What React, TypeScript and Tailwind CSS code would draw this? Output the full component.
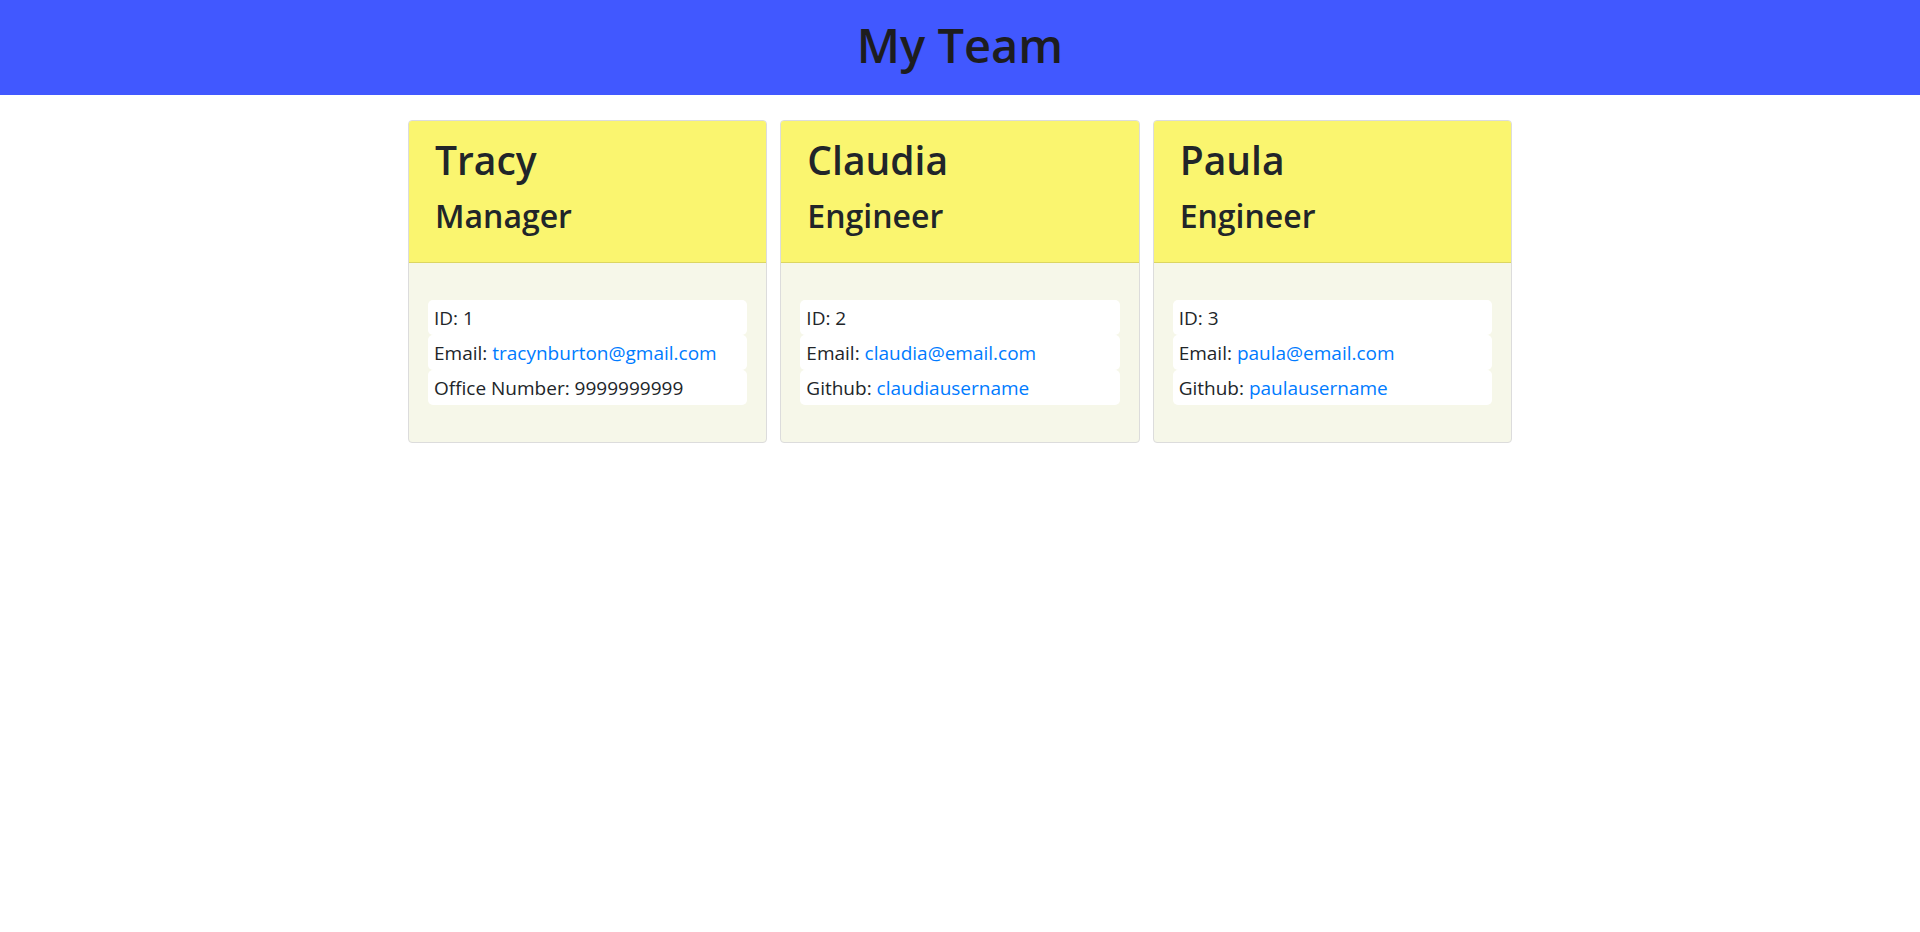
const team = [
  {
    name: "Tracy",
    role: "Manager",
    id: 1,
    email: "tracynburton@gmail.com",
    extra: { label: "Office Number", value: "9999999999", link: false },
  },
  {
    name: "Claudia",
    role: "Engineer",
    id: 2,
    email: "claudia@email.com",
    extra: { label: "Github", value: "claudiausername", link: true },
  },
  {
    name: "Paula",
    role: "Engineer",
    id: 3,
    email: "paula@email.com",
    extra: { label: "Github", value: "paulausername", link: true },
  },
];

function MemberCard({ member }: { member: (typeof team)[number] }) {
  return (
    <div className="flex flex-col border border-[#dcdcdc] rounded-[4px] overflow-hidden bg-[#f6f7e9]">
      {/* Card header */}
      <div className="bg-[#faf56f] border-b border-[#dcd661] px-[26px] pt-[15px] pb-[27px] text-[#212529]">
        <h1 className="text-[39px] leading-[48px] font-semibold">{member.name}</h1>
        <h2 className="text-[32px] leading-[38px] font-semibold mt-[13px]">{member.role}</h2>
      </div>

      {/* Card body */}
      <div className="px-[19px] py-[37px]">
        <ul className="flex flex-col text-[19px] leading-[35px] text-[#212529]">
          <li className="bg-white rounded-[5px] pl-[6px] pr-[6px] pt-[1px] h-[35px]">ID: {member.id}</li>
          <li className="bg-white rounded-[5px] pl-[6px] pr-[6px] pt-[1px] h-[35px]">
            Email: <a href="#" className="text-[#007bff]">{member.email}</a>
          </li>
          <li className="bg-white rounded-[5px] pl-[6px] pr-[6px] pt-[1px] h-[35px]">
            {member.extra.label}:{" "}
            {member.extra.link ? (
              <a href="#" className="text-[#007bff]">{member.extra.value}</a>
            ) : (
              member.extra.value
            )}
          </li>
        </ul>
      </div>
    </div>
  );
}

export default function App() {
  return (
    <main className="min-h-screen bg-white font-['Segoe_UI','Open_Sans',sans-serif]">
      <header className="h-[95px] bg-[#4158ff] flex items-center justify-center">
        <h1 className="text-[47px] leading-none font-semibold text-[#1d1d1f] -mt-[4px]">My Team</h1>
      </header>

      <section className="mx-auto w-[1104px] mt-[25px] grid grid-cols-3 gap-[13px] items-start">
        {team.map((m) => (
          <MemberCard key={m.id} member={m} />
        ))}
      </section>
    </main>
  );
}
